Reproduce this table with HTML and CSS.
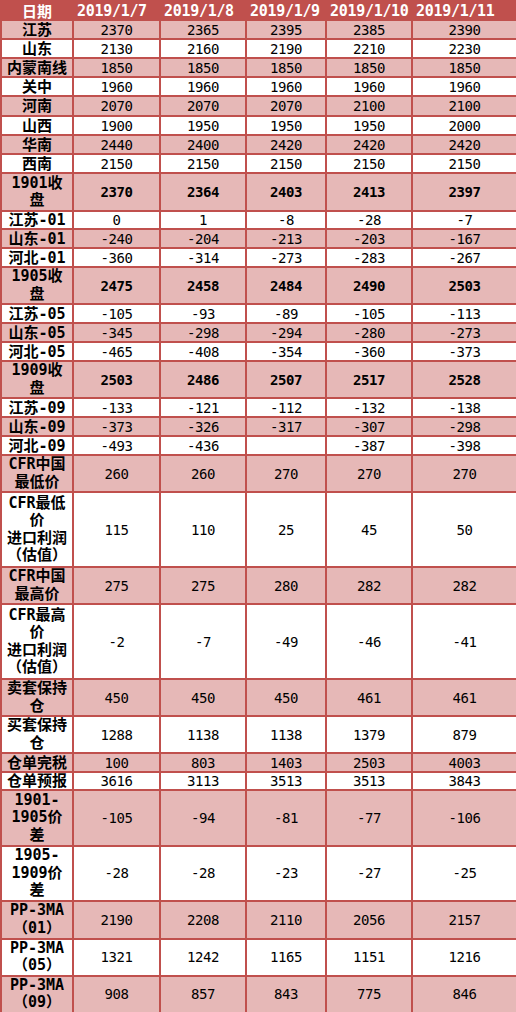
FILE: index.html
```html
<!DOCTYPE html>
<html lang="zh-CN">
<head>
<meta charset="utf-8">
<title>PP 基差表</title>
<link rel="stylesheet" href="styles.css">
</head>
<body>
<table class="sheet">
  <colgroup>
    <col class="c-label"><col class="c-d1"><col class="c-d2"><col class="c-d3"><col class="c-d4"><col class="c-d5">
  </colgroup>
  <thead>
    <tr class="h19 head">
      <th class="lbl-head">日期</th><th class="date">2019/1/7</th><th class="date">2019/1/8</th><th class="date">2019/1/9</th><th class="date">2019/1/10</th><th class="date">2019/1/11</th>
    </tr>
  </thead>
  <tbody>
    <tr class="h19 pink"><th class="lbl">江苏</th><td>2370</td><td>2365</td><td>2395</td><td>2385</td><td>2390</td></tr>
    <tr class="h19"><th class="lbl">山东</th><td>2130</td><td>2160</td><td>2190</td><td>2210</td><td>2230</td></tr>
    <tr class="h19 pink"><th class="lbl">内蒙南线</th><td>1850</td><td>1850</td><td>1850</td><td>1850</td><td>1850</td></tr>
    <tr class="h19"><th class="lbl">关中</th><td>1960</td><td>1960</td><td>1960</td><td>1960</td><td>1960</td></tr>
    <tr class="h20 pink"><th class="lbl">河南</th><td>2070</td><td>2070</td><td>2070</td><td>2100</td><td>2100</td></tr>
    <tr class="h19"><th class="lbl">山西</th><td>1900</td><td>1950</td><td>1950</td><td>1950</td><td>2000</td></tr>
    <tr class="h19 pink"><th class="lbl">华南</th><td>2440</td><td>2400</td><td>2420</td><td>2420</td><td>2420</td></tr>
    <tr class="h19"><th class="lbl">西南</th><td>2150</td><td>2150</td><td>2150</td><td>2150</td><td>2150</td></tr>
    <tr class="h38 pink strong"><th class="lbl">1901收<br>盘</th><td>2370</td><td>2364</td><td>2403</td><td>2413</td><td>2397</td></tr>
    <tr class="h18"><th class="lbl">江苏-01</th><td>0</td><td>1</td><td>-8</td><td>-28</td><td>-7</td></tr>
    <tr class="h19 pink"><th class="lbl">山东-01</th><td>-240</td><td>-204</td><td>-213</td><td>-203</td><td>-167</td></tr>
    <tr class="h19"><th class="lbl">河北-01</th><td>-360</td><td>-314</td><td>-273</td><td>-283</td><td>-267</td></tr>
    <tr class="h37 pink strong"><th class="lbl">1905收<br>盘</th><td>2475</td><td>2458</td><td>2484</td><td>2490</td><td>2503</td></tr>
    <tr class="h19"><th class="lbl">江苏-05</th><td>-105</td><td>-93</td><td>-89</td><td>-105</td><td>-113</td></tr>
    <tr class="h19 pink"><th class="lbl">山东-05</th><td>-345</td><td>-298</td><td>-294</td><td>-280</td><td>-273</td></tr>
    <tr class="h19"><th class="lbl">河北-05</th><td>-465</td><td>-408</td><td>-354</td><td>-360</td><td>-373</td></tr>
    <tr class="h37 pink strong"><th class="lbl">1909收<br>盘</th><td>2503</td><td>2486</td><td>2507</td><td>2517</td><td>2528</td></tr>
    <tr class="h19"><th class="lbl">江苏-09</th><td>-133</td><td>-121</td><td>-112</td><td>-132</td><td>-138</td></tr>
    <tr class="h19 pink"><th class="lbl">山东-09</th><td>-373</td><td>-326</td><td>-317</td><td>-307</td><td>-298</td></tr>
    <tr class="h19"><th class="lbl">河北-09</th><td>-493</td><td>-436</td><td></td><td>-387</td><td>-398</td></tr>
    <tr class="h37 pink"><th class="lbl">CFR中国<br>最低价</th><td>260</td><td>260</td><td>270</td><td>270</td><td>270</td></tr>
    <tr class="h75"><th class="lbl">CFR最低<br>价<br>进口利润<br><span class="po">（</span>估值<span class="pc">）</span></th><td>115</td><td>110</td><td>25</td><td>45</td><td>50</td></tr>
    <tr class="h37 pink"><th class="lbl">CFR中国<br>最高价</th><td>275</td><td>275</td><td>280</td><td>282</td><td>282</td></tr>
    <tr class="h75"><th class="lbl">CFR最高<br>价<br>进口利润<br><span class="po">（</span>估值<span class="pc">）</span></th><td>-2</td><td>-7</td><td>-49</td><td>-46</td><td>-41</td></tr>
    <tr class="h37 pink"><th class="lbl">卖套保持<br>仓</th><td>450</td><td>450</td><td>450</td><td>461</td><td>461</td></tr>
    <tr class="h37"><th class="lbl">买套保持<br>仓</th><td>1288</td><td>1138</td><td>1138</td><td>1379</td><td>879</td></tr>
    <tr class="h19 pink"><th class="lbl">仓单完税</th><td>100</td><td>803</td><td>1403</td><td>2503</td><td>4003</td></tr>
    <tr class="h18"><th class="lbl">仓单预报</th><td>3616</td><td>3113</td><td>3513</td><td>3513</td><td>3843</td></tr>
    <tr class="h56 pink"><th class="lbl">1901-<br>1905价<br>差</th><td>-105</td><td>-94</td><td>-81</td><td>-77</td><td>-106</td></tr>
    <tr class="h54"><th class="lbl">1905-<br>1909价<br>差</th><td>-28</td><td>-28</td><td>-23</td><td>-27</td><td>-25</td></tr>
    <tr class="h38 pink"><th class="lbl">PP-3MA<br><span class="po">（</span>01<span class="pc">）</span></th><td>2190</td><td>2208</td><td>2110</td><td>2056</td><td>2157</td></tr>
    <tr class="h36"><th class="lbl">PP-3MA<br><span class="po">（</span>05<span class="pc">）</span></th><td>1321</td><td>1242</td><td>1165</td><td>1151</td><td>1216</td></tr>
    <tr class="h37 pink"><th class="lbl">PP-3MA<br><span class="po">（</span>09<span class="pc">）</span></th><td>908</td><td>857</td><td>843</td><td>775</td><td>846</td></tr>
  </tbody>
</table>
</body>
</html>
```

FILE: styles.css
```css
html, body {
  margin: 0;
  padding: 0;
  background: #ffffff;
}

.sheet {
  border-collapse: collapse;
  table-layout: fixed;
  width: 516px;
  color: #000000;
}

.c-label { width: 72px; }
.c-d1 { width: 87px; }
.c-d2 { width: 86px; }
.c-d3 { width: 80px; }
.c-d4 { width: 86px; }
.c-d5 { width: 105px; }

.sheet th,
.sheet td {
  border: 2px solid #c0504d;
  padding: 0 4px;
  vertical-align: middle;
  text-align: center;
  white-space: nowrap;
  overflow: hidden;
}

.sheet td {
  font-family: "DejaVu Sans Mono", monospace;
  font-size: 14px;
  letter-spacing: -0.4px;
  line-height: 14px;
  font-weight: normal;
}

.strong td {
  font-weight: bold;
}

.pink th,
.pink td {
  background: #e6b8b7;
}

.head th {
  background: #c0504d;
  color: #ffffff;
  font-weight: bold;
  line-height: 14px;
}

.lbl-head {
  font-family: "Noto Sans CJK SC", sans-serif;
  font-size: 15px;
}

.head .date {
  font-family: "DejaVu Sans Mono", monospace;
  font-size: 15px;
  letter-spacing: -0.3px;
  text-align: left;
  padding-left: 3px;
}

.lbl {
  font-family: "DejaVu Sans Mono", "Noto Sans CJK SC", sans-serif;
  font-size: 15px;
  font-weight: bold;
  line-height: 17.5px;
}

.lbl .po,
.lbl .pc {
  display: inline-block;
  width: 15px;
  font-family: "Noto Sans CJK SC", sans-serif;
  line-height: 10px;
}

.lbl .po { text-align: right; }
.lbl .pc { text-align: left; }

.h18 .lbl,
.h19 .lbl,
.h20 .lbl {
  line-height: 14px;
}

.h18 { height: 18px; }
.h19 { height: 19px; }
.h20 { height: 20px; }
.h36 { height: 36px; }
.h37 { height: 37px; }
.h38 { height: 38px; }
.h54 { height: 54px; }
.h56 { height: 56px; }
.h75 { height: 75px; }
```
